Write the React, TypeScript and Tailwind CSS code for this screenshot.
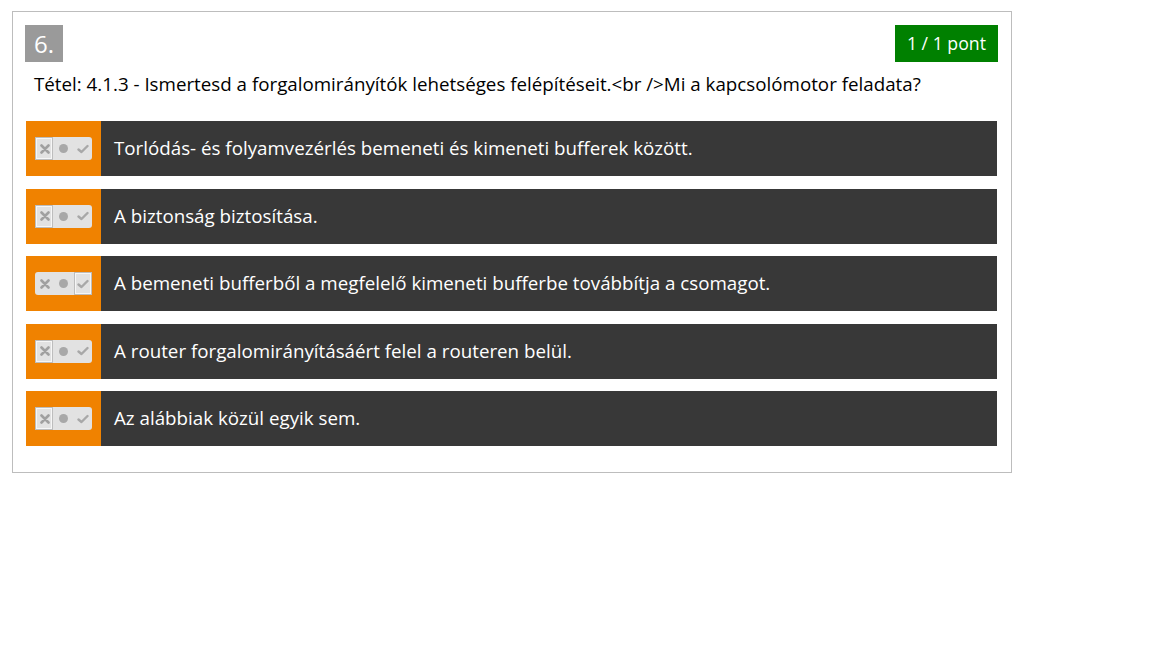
const answers = [
  { text: "Torlódás- és folyamvezérlés bemeneti és kimeneti bufferek között.", state: "no" },
  { text: "A biztonság biztosítása.", state: "no" },
  { text: "A bemeneti bufferből a megfelelő kimeneti bufferbe továbbítja a csomagot.", state: "yes" },
  { text: "A router forgalomirányításáért felel a routeren belül.", state: "no" },
  { text: "Az alábbiak közül egyik sem.", state: "no" },
];

function Toggle({ state }: { state: string }) {
  return (
    <div className="relative flex h-[23px] w-[57px] items-center rounded-[3px] bg-[#e2e2e2]">
      <div className="flex w-[19px] justify-center">
        <svg width="10" height="10" viewBox="0 0 10 10">
          <path d="M1.5 1.5 L8.5 8.5 M8.5 1.5 L1.5 8.5" stroke="#a0a0a0" strokeWidth="2.6" strokeLinecap="round" />
        </svg>
      </div>
      <div className="flex w-[19px] justify-center">
        <div className="h-[9px] w-[9px] rounded-full bg-[#a8a8a8]" />
      </div>
      <div className="flex w-[19px] justify-center">
        <svg width="12" height="10" viewBox="0 0 12 10">
          <path d="M1.5 5.5 L4.5 8 L10.5 2" stroke="#a8a8a8" strokeWidth="2.4" fill="none" strokeLinecap="round" strokeLinejoin="round" />
        </svg>
      </div>
      {state === "no" && (
        <div className="absolute left-0 top-0 h-[23px] w-[18px] border border-[#bdbdbd] shadow-[inset_0_0_0_1px_#f6f6f6]" />
      )}
      {state === "yes" && (
        <div className="absolute right-0 top-0 h-[23px] w-[18px] border border-[#bdbdbd] shadow-[inset_0_0_0_1px_#f6f6f6]" />
      )}
    </div>
  );
}

export default function App() {
  return (
    <div className="min-h-screen bg-white font-['Open_Sans',sans-serif] pl-[12px] pt-[11px]">
      <div className="w-[1000px] border border-[#bdbdbd] pb-[26px] pt-[13px]">
        {/* Header */}
        <div className="flex items-start justify-between px-[12px]">
          <div className="flex h-[37px] w-[38px] items-center justify-center bg-[#9a9a9a] text-[24px] text-white">
            6.
          </div>
          <div className="mr-[1px] flex h-[37px] items-center bg-[#008000] px-[12px] text-[17.7px] text-white">
            1 / 1 pont
          </div>
        </div>

        <p className="mt-[10px] px-[21px] text-[18.75px] leading-[24px] text-black">
          Tétel: 4.1.3 - Ismertesd a forgalomirányítók lehetséges felépítéseit.&lt;br /&gt;Mi a kapcsolómotor feladata?
        </p>

        {/* Answers */}
        <div className="mt-[25px] flex flex-col gap-[12.5px] pl-[13px] pr-[14px]">
          {answers.map((a) => (
            <div key={a.text} className="flex h-[55px] bg-[#383838]">
              <div className="flex w-[75px] shrink-0 items-center justify-center bg-[#f08200]">
                <Toggle state={a.state} />
              </div>
              <div className="flex items-center pl-[13px] text-[18.75px] text-white">{a.text}</div>
            </div>
          ))}
        </div>
      </div>
    </div>
  );
}
